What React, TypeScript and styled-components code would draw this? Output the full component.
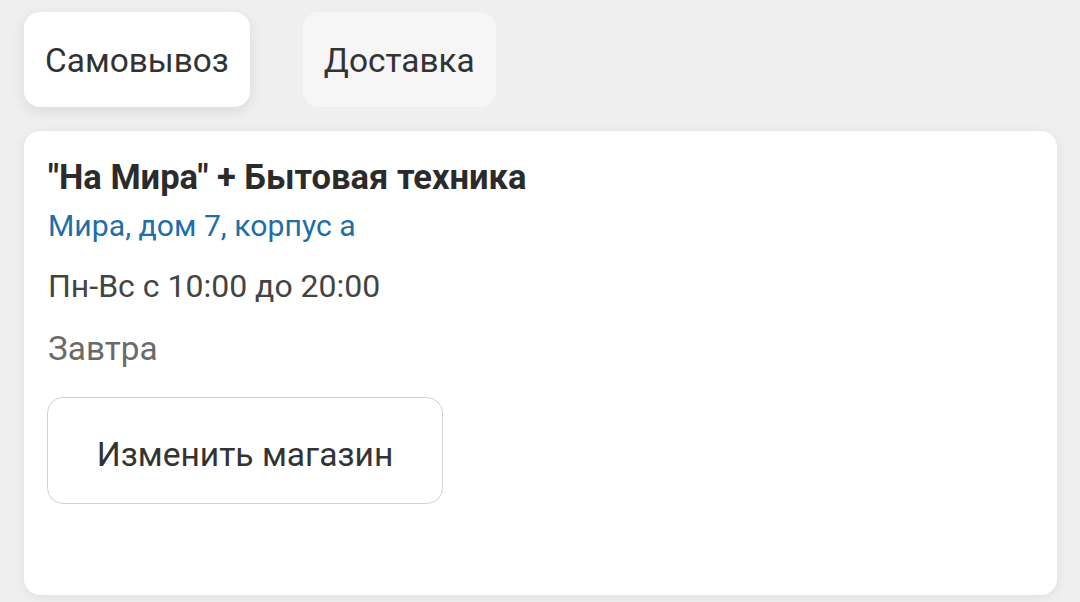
import React from "react";
import styled, { createGlobalStyle } from "styled-components";

const GlobalStyle = createGlobalStyle`
  html, body {
    margin: 0;
    padding: 0;
    background: #efefef;
    font-family: Roboto, "Noto Sans", sans-serif;
    -webkit-font-smoothing: antialiased;
  }
`;

const Page = styled.div`
  display: flex;
  flex-direction: column;
  gap: 24px;
  padding: 12px 23px 0 24px;
  height: 602px;
  box-sizing: border-box;
  overflow: hidden;
`;

const Tabs = styled.div`
  display: flex;
  gap: 53px;
`;

const Tab = styled.button<{ $active?: boolean }>`
  font-family: inherit;
  font-size: 33.4px;
  line-height: 40px;
  color: #333;
  border: none;
  border-radius: 16px;
  padding: 29px 21px 26px;
  background: ${(p) => (p.$active ? "#ffffff" : "#f6f6f6")};
  box-shadow: ${(p) => (p.$active ? "0 4px 14px rgba(0,0,0,0.09)" : "none")};
  cursor: pointer;
`;

const Card = styled.section`
  background: #fff;
  border-radius: 16px;
  height: 464px;
  box-sizing: border-box;
  padding: 24px 24px 0;
  box-shadow: 0 2px 12px rgba(0, 0, 0, 0.07);
  display: flex;
  flex-direction: column;
  align-items: flex-start;
`;

const Title = styled.h2`
  margin: 0;
  font-size: 34.5px;
  line-height: 44px;
  font-weight: 700;
  color: #2b2b2b;
`;

const Address = styled.a`
  margin-top: 7px;
  font-size: 30.2px;
  line-height: 40px;
  color: #1f6ea8;
  text-decoration: none;
`;

const Hours = styled.div`
  margin-top: 20px;
  font-size: 32px;
  line-height: 40px;
  color: #444;
`;

const Day = styled.div`
  margin-top: 23px;
  font-size: 33.3px;
  line-height: 40px;
  color: #6a6a6a;
`;

const OutlineButton = styled.button`
  margin-top: 28px;
  margin-left: -1px;
  font-family: inherit;
  font-size: 33.6px;
  line-height: 40px;
  color: #333;
  background: #fff;
  border: 1px solid #d2d2d2;
  border-radius: 16px;
  padding: 37px 0 28px;
  width: 396px;
  white-space: nowrap;
  text-align: center;
  cursor: pointer;
`;

export default function App() {
  return (
    <>
      <GlobalStyle />
      <Page>
        <Tabs>
          <Tab $active>Самовывоз</Tab>
          <Tab>Доставка</Tab>
        </Tabs>
        <Card>
          <Title>"На Мира" + Бытовая техника</Title>
          <Address href="#">Мира, дом 7, корпус а</Address>
          <Hours>Пн-Вс с 10:00 до 20:00</Hours>
          <Day>Завтра</Day>
          <OutlineButton>Изменить магазин</OutlineButton>
        </Card>
      </Page>
    </>
  );
}
